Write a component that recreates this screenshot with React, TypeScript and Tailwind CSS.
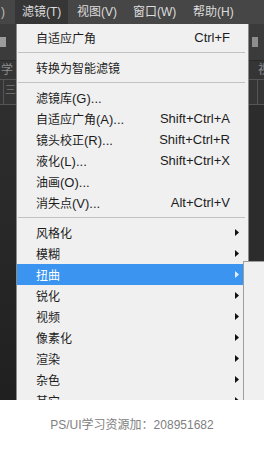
import React from "react";

const CJK = /[\u3000-\u9fff\uff00-\uffef]/;

function T({ s }: { s: string }) {
  const parts = s.split(/([\u3000-\u9fff\uff00-\uffef]+)/).filter((p) => p !== "");
  return (
    <>
      {parts.map((p, i) =>
        CJK.test(p) ? (
          <span key={i} className="text-[12px]">
            {p}
          </span>
        ) : (
          <span key={i} className="text-[13px]">
            {p}
          </span>
        )
      )}
    </>
  );
}

type Item =
  | { type: "item"; label: string; shortcut?: string; arrow?: boolean; active?: boolean }
  | { type: "sep" };

const items: Item[] = [
  { type: "item", label: "自适应广角", shortcut: "Ctrl+F" },
  { type: "sep" },
  { type: "item", label: "转换为智能滤镜" },
  { type: "sep" },
  { type: "item", label: "滤镜库(G)..." },
  { type: "item", label: "自适应广角(A)...", shortcut: "Shift+Ctrl+A" },
  { type: "item", label: "镜头校正(R)...", shortcut: "Shift+Ctrl+R" },
  { type: "item", label: "液化(L)...", shortcut: "Shift+Ctrl+X" },
  { type: "item", label: "油画(O)..." },
  { type: "item", label: "消失点(V)...", shortcut: "Alt+Ctrl+V" },
  { type: "sep" },
  { type: "item", label: "风格化", arrow: true },
  { type: "item", label: "模糊", arrow: true },
  { type: "item", label: "扭曲", arrow: true, active: true },
  { type: "item", label: "锐化", arrow: true },
  { type: "item", label: "视频", arrow: true },
  { type: "item", label: "像素化", arrow: true },
  { type: "item", label: "渲染", arrow: true },
  { type: "item", label: "杂色", arrow: true },
  { type: "item", label: "其它", arrow: true },
];

function Arrow({ color }: { color: string }) {
  return (
    <svg width="4" height="7" viewBox="0 0 4 7">
      <path d="M0 0L4 3.5L0 7Z" fill={color} />
    </svg>
  );
}

export default function App() {
  return (
    <div className="w-[264px] h-[450px] flex flex-col bg-white font-['Liberation_Sans','Noto_Sans_CJK_SC',sans-serif] overflow-hidden">
      <div className="relative h-[400px] shrink-0 bg-[#2a2a2a] flex flex-col overflow-hidden">
        {/* menubar */}
        <div className="h-[24px] shrink-0 bg-[#464646] flex items-stretch text-[12px] text-[#dcdcdc]">
          <div className="w-[15px] flex items-center pl-[1px] text-[#bdbdbd]">)</div>
          <div className="w-[53px] bg-[#363636] flex items-center pl-[7px]">滤镜(T)</div>
          <div className="w-[57px] flex items-center pl-[9px]">视图(V)</div>
          <div className="w-[60px] flex items-center pl-[8px]">窗口(W)</div>
          <div className="flex items-center pl-[8px]">帮助(H)</div>
        </div>
        {/* body behind menu */}
        <div className="flex-1 flex justify-between">
          <div className="w-[16px] flex flex-col">
            <div className="h-[13px] bg-[#3b3b3b]" />
            <div className="h-[10px] bg-[#3b3b3b] flex">
              <div className="w-[6px] bg-[#9c9c9c]" />
            </div>
            <div className="h-[14px] bg-[#3b3b3b] border-b border-[#2a2a2a]" />
            <div className="h-[18px] bg-[#353535] flex items-center text-[12px] text-[#8c8c8c] pl-[1px] overflow-hidden">学</div>
            <div className="h-[26px] bg-[#353535] border-y border-[#555] flex">
              <div className="w-[4px] border-r border-[#555]" />
              <div className="flex-1 text-[11px] text-[#777] leading-[20px] pl-[1px]">三</div>
            </div>
            <div className="flex-1 bg-gradient-to-b from-[#2e2e2e] to-[#202020]" />
          </div>
          <div className="w-[15px] flex flex-col">
            <div className="h-[13px] bg-[#3b3b3b]" />
            <div className="h-[10px] bg-[#3b3b3b] flex pl-[3px]">
              <div className="w-[6px] bg-[#8e8e8e]" />
            </div>
            <div className="h-[14px] bg-[#3b3b3b] border-b border-[#2a2a2a]" />
            <div className="h-[18px] bg-[#353535] flex items-center text-[12px] text-[#8c8c8c] pl-[9px] overflow-hidden whitespace-nowrap">视</div>
            <div className="h-[26px] bg-[#353535] border-y border-[#555] flex">
              <div className="w-[9px] border-r border-[#555]" />
            </div>
            <div className="flex-1 bg-[#2c2c2c]" />
          </div>
        </div>

        {/* dropdown */}
        <div className="absolute left-[16px] top-[24px] w-[233px] h-[376px] bg-[#f0f0f0] border-x border-[#8a8a8a] pt-[3px] text-[#1c1c1c] flex flex-col">
          {items.map((it, i) =>
            it.type === "sep" ? (
              <div key={i} className="h-[9px] shrink-0 flex flex-col justify-start pt-[4px] pl-[1px] pr-[3px]">
                <div className="h-[1px] bg-[#c2c2c2]" />
              </div>
            ) : (
              <div
                key={i}
                className={
                  it.active
                    ? "h-[21px] shrink-0 flex items-center pl-[19px] pr-[9px] bg-[#3a94f0] text-white whitespace-nowrap"
                    : "h-[21px] shrink-0 flex items-center pl-[19px] pr-[9px] whitespace-nowrap"
                }
              >
                <span className="flex-1">
                  <T s={it.label} />
                </span>
                {it.shortcut ? (
                  <span className="text-[13px]">{it.shortcut}</span>
                ) : null}
                <span className="w-[4px] ml-[5px] flex items-center">
                  {it.arrow ? <Arrow color={it.active ? "#dfeeff" : "#111"} /> : null}
                </span>
              </div>
            )
          )}
        </div>

        {/* submenu */}
        <div className="absolute left-[243px] top-[261px] w-[30px] h-[150px] bg-[#f0f0f0] border-l border-t border-[#9d9d9d]" />
      </div>
      <div className="flex-1 flex items-center justify-center text-[12px] text-[#808080]">
        PS/UI学习资源加：208951682
      </div>
    </div>
  );
}
